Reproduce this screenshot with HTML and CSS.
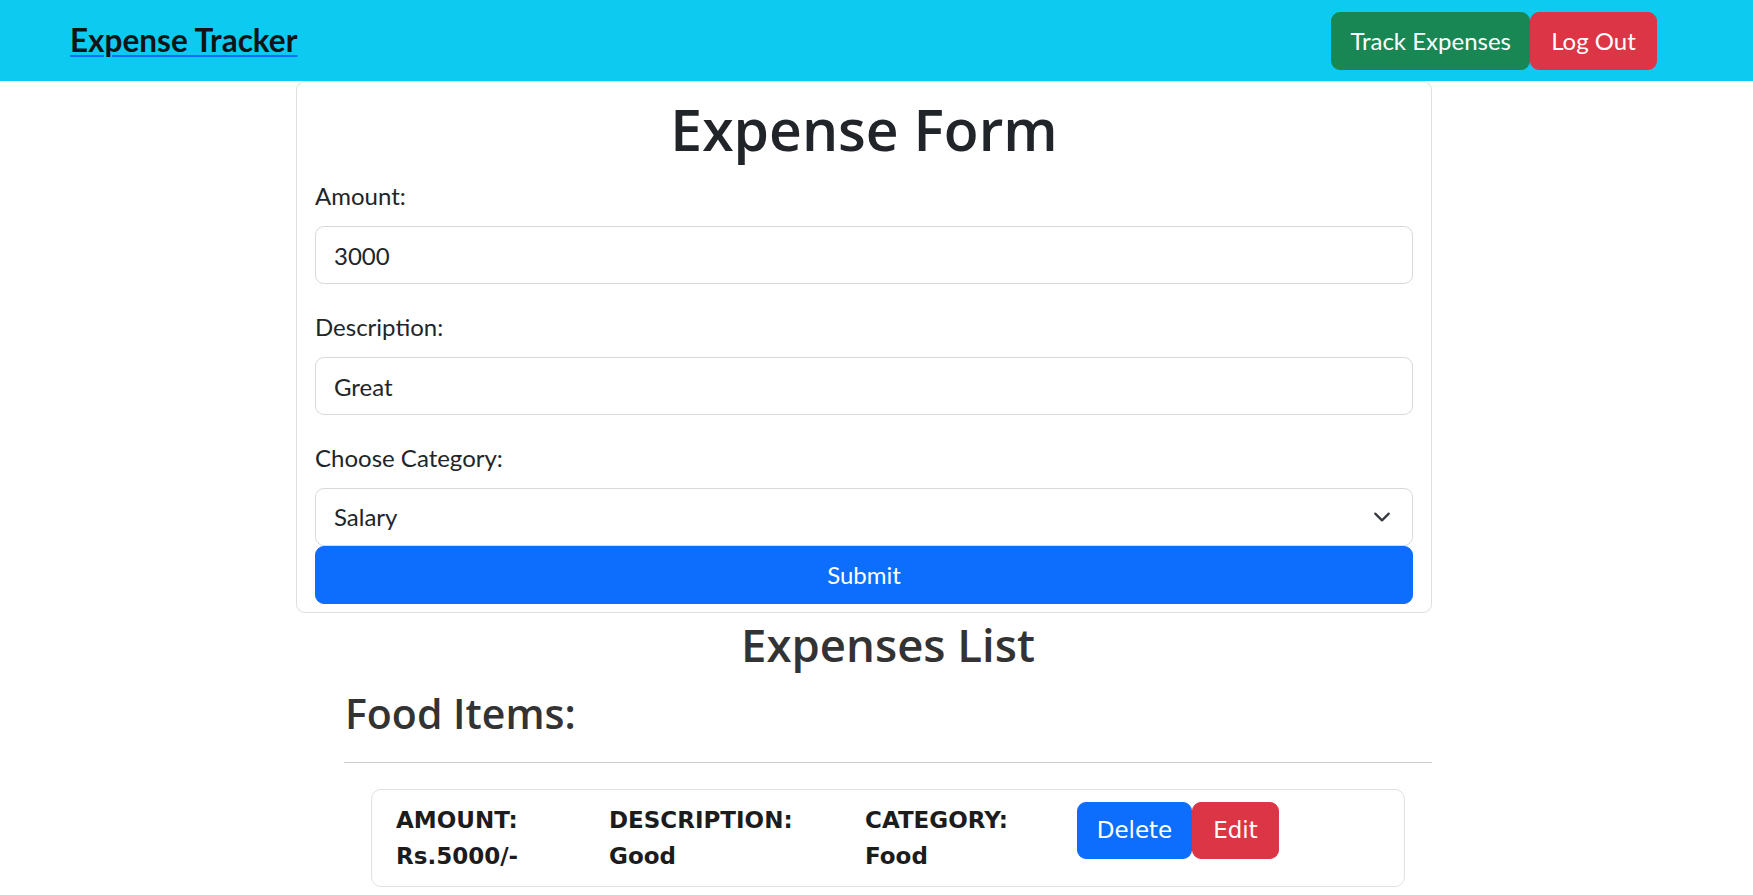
FILE: index.html
```html
<!DOCTYPE html>
<html lang="en">
<head>
<meta charset="utf-8">
<title>Expense Tracker</title>
<link rel="stylesheet" href="styles.css">
</head>
<body>
<nav class="navbar">
  <a class="brand" href="#"><span class="brand-text">Expense Tracker</span></a>
  <div class="nav-actions">
    <button class="btn btn-success" type="button">Track Expenses</button>
    <button class="btn btn-danger btn-logout" type="button">Log Out</button>
  </div>
</nav>

<main class="page">
  <section class="form-card">
    <h1 class="form-title">Expense Form</h1>
    <form class="expense-form">
      <div class="field">
        <label class="field-label" for="amount">Amount:</label>
        <input class="field-input" id="amount" type="text" value="3000">
      </div>
      <div class="field">
        <label class="field-label" for="desc">Description:</label>
        <input class="field-input" id="desc" type="text" value="Great">
      </div>
      <div class="field field-last">
        <label class="field-label" for="cat">Choose Category:</label>
        <div class="select-wrap">
          <select class="field-input field-select" id="cat">
            <option>Salary</option>
            <option>Food</option>
          </select>
          <svg class="select-arrow" width="24" height="18" viewBox="0 0 16 16" aria-hidden="true"><path d="m2 5 6 6 6-6" fill="none" stroke="#343a40" stroke-width="2" stroke-linecap="round" stroke-linejoin="round"/></svg>
        </div>
      </div>
      <button class="btn btn-primary btn-block" type="button">Submit</button>
    </form>
  </section>

  <section class="list-section">
    <h2 class="list-title">Expenses List</h2>
    <h3 class="group-title">Food Items:</h3>
    <hr class="divider">
    <div class="item-card">
      <div class="item-col col-amount">
        <div>AMOUNT:</div>
        <div>Rs.5000/-</div>
      </div>
      <div class="item-col col-desc">
        <div>DESCRIPTION:</div>
        <div>Good</div>
      </div>
      <div class="item-col col-cat">
        <div>CATEGORY:</div>
        <div>Food</div>
      </div>
      <div class="item-actions">
        <button class="btn btn-primary btn-comic btn-delete" type="button">Delete</button>
        <button class="btn btn-danger btn-comic btn-edit" type="button">Edit</button>
      </div>
    </div>
  </section>
</main>
</body>
</html>
```
FILE: styles.css
```css
* { box-sizing: border-box; }

html, body {
  margin: 0;
  padding: 0;
  background: #ffffff;
}

body {
  font-family: Lato, "Open Sans", sans-serif;
  font-size: 24px;
  color: #212529;
}

/* ---------- navbar ---------- */
.navbar {
  height: 81px;
  background: #0dcaf0;
  display: flex;
  align-items: center;
  justify-content: space-between;
  padding: 0 96px 0 70px;
}

.brand {
  font-size: 31.5px;
  font-weight: 700;
  line-height: 45px;
  color: #111416;
  text-decoration: underline;
  text-decoration-color: #0d6efd;
  text-decoration-thickness: 2px;
  text-underline-offset: 3px;
}

.brand-text { color: #111416; }

.nav-actions {
  display: flex;
}

/* ---------- buttons ---------- */
.btn {
  font-family: Lato, "Open Sans", sans-serif;
  font-size: 24px;
  line-height: 36px;
  padding: 10px 18px;
  border: 1px solid transparent;
  border-radius: 9px;
  color: #ffffff;
  cursor: pointer;
  white-space: nowrap;
}

.btn-success { background: #198754; border-color: #198754; }
.btn-danger  { background: #dc3545; border-color: #dc3545; }
.btn-primary { background: #0d6efd; border-color: #0d6efd; }

.btn-logout { min-width: 127px; }

.btn-block {
  display: block;
  width: 100%;
  text-align: center;
}

/* ---------- form card ---------- */
.page {
  display: block;
}

.form-card {
  width: 1136px;
  margin: 0 0 0 296px;
  border: 1px solid #dcdfe3;
  border-radius: 9px;
  padding: 11px 18px 8px 18px;
}

.form-title {
  margin: 0 0 13px 0;
  font-family: "Open Sans", Lato, sans-serif;
  font-size: 57px;
  font-weight: 600;
  line-height: 72px;
  text-align: center;
  color: #212529;
}

.expense-form {
  margin: 0;
}

.field {
  margin-bottom: 25px;
}

.field-last {
  margin-bottom: 0;
}

.field-label {
  display: block;
  line-height: 36px;
  margin-bottom: 12px;
}

.field-input {
  display: block;
  width: 100%;
  height: 58px;
  font-family: Lato, "Open Sans", sans-serif;
  font-size: 24px;
  line-height: 36px;
  padding: 10px 18px;
  color: #212529;
  background: #ffffff;
  border: 1px solid #d6d9dd;
  border-radius: 9px;
  outline: none;
}

.select-wrap {
  position: relative;
}

.field-select {
  appearance: none;
  -webkit-appearance: none;
  padding-right: 54px;
}

.select-arrow {
  position: absolute;
  right: 19px;
  top: 20px;
  pointer-events: none;
}

/* ---------- list ---------- */
.list-section {
  width: 1088px;
  margin: 3px 0 0 344px;
}

.list-title {
  margin: 0 0 14px 0;
  font-family: "Open Sans", Lato, sans-serif;
  font-size: 45.5px;
  font-weight: 600;
  line-height: 57.6px;
  text-align: center;
  color: #333333;
}

.group-title {
  margin: 0 0 12px 0;
  font-family: "Open Sans", Lato, sans-serif;
  font-size: 41px;
  font-weight: 600;
  line-height: 50.4px;
  color: #333333;
  padding-left: 1px;
}

.divider {
  margin: 24px 0 26px 0;
  border: 0;
  border-top: 1px solid #cfcfcf;
  height: 0;
}

.item-card {
  margin: 0 27px;
  border: 1px solid #dee2e6;
  border-radius: 10px;
  padding: 12px 24px 12px 24px;
  display: flex;
  align-items: flex-start;
  font-family: "DejaVu Sans", sans-serif;
  font-weight: 700;
  font-size: 23px;
  line-height: 36px;
  color: #1c1c1c;
}

.item-col { flex: none; }
.col-amount { width: 213px; }
.col-desc { width: 256px; }
.col-cat { width: 212px; }

.item-actions {
  display: flex;
}

.btn-comic {
  font-family: "DejaVu Sans", sans-serif;
  font-weight: 400;
  font-size: 23px;
  line-height: 35px;
}

.btn-delete { min-width: 115px; }
.btn-edit { min-width: 87px; }
```
